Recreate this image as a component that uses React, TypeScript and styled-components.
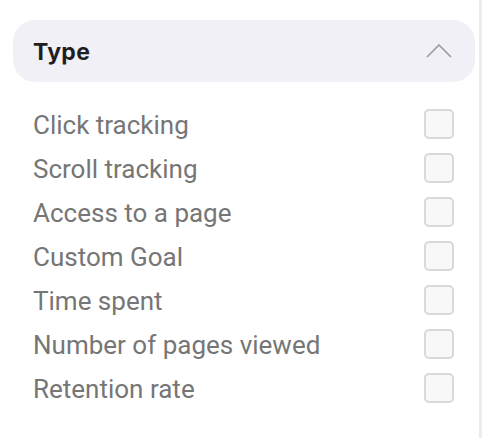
import React, { FC } from "react";
import styled, { createGlobalStyle } from "styled-components";

const GlobalStyle = createGlobalStyle`
  body {
    margin: 0;
    background: #ffffff;
  }
`;

const types = [
  "Click tracking",
  "Scroll tracking",
  "Access to a page",
  "Custom Goal",
  "Time spent",
  "Number of pages viewed",
  "Retention rate",
];

const Chevron: FC = () => (
  <svg width="26" height="14" viewBox="0 0 26 14">
    <polyline
      points="1,13 13,1 25,13"
      fill="none"
      stroke="#9b9b9b"
      strokeWidth="1.6"
    />
  </svg>
);

const App: FC = () => {
  return (
    <>
      <GlobalStyle />
      <Page>
        <Panel>
          <Header>
            <Title>Type</Title>
            <Chevron />
          </Header>
          <List>
            {types.map((t) => (
              <Row key={t}>
                <Label>{t}</Label>
                <Checkbox />
              </Row>
            ))}
          </List>
        </Panel>
        <Track />
      </Page>
    </>
  );
};

export default App;

const Page = styled.div`
  display: flex;
  width: 482px;
  height: 438px;
`;

const Panel = styled.div`
  flex: 1;
  padding: 20px 4px 0 13px;
`;

const Track = styled.div`
  width: 3px;
  background: #ececec;
`;

const Header = styled.div`
  display: flex;
  align-items: center;
  justify-content: space-between;
  height: 62px;
  padding: 0 23px 0 20px;
  border-radius: 22px;
  background: #f1f0f7;
`;

const Title = styled.div`
  font-family: Inter, "Noto Sans", sans-serif;
  font-weight: 700;
  font-size: 23px;
  color: #1f1f1f;
  letter-spacing: 0.3px;
  padding-top: 2px;
`;

const List = styled.div`
  display: flex;
  flex-direction: column;
  margin-top: 20px;
  padding: 0 21px 0 20px;
`;

const Row = styled.div`
  display: flex;
  align-items: center;
  justify-content: space-between;
  height: 44px;
`;

const Label = styled.span`
  font-family: Roboto, "Liberation Sans", sans-serif;
  font-size: 26px;
  color: #767676;
  padding-top: 2px;
`;

const Checkbox = styled.div`
  box-sizing: border-box;
  width: 30px;
  height: 30px;
  border: 2px solid #d9d9d9;
  border-radius: 5px;
  background: #f8f8f8;
`;
